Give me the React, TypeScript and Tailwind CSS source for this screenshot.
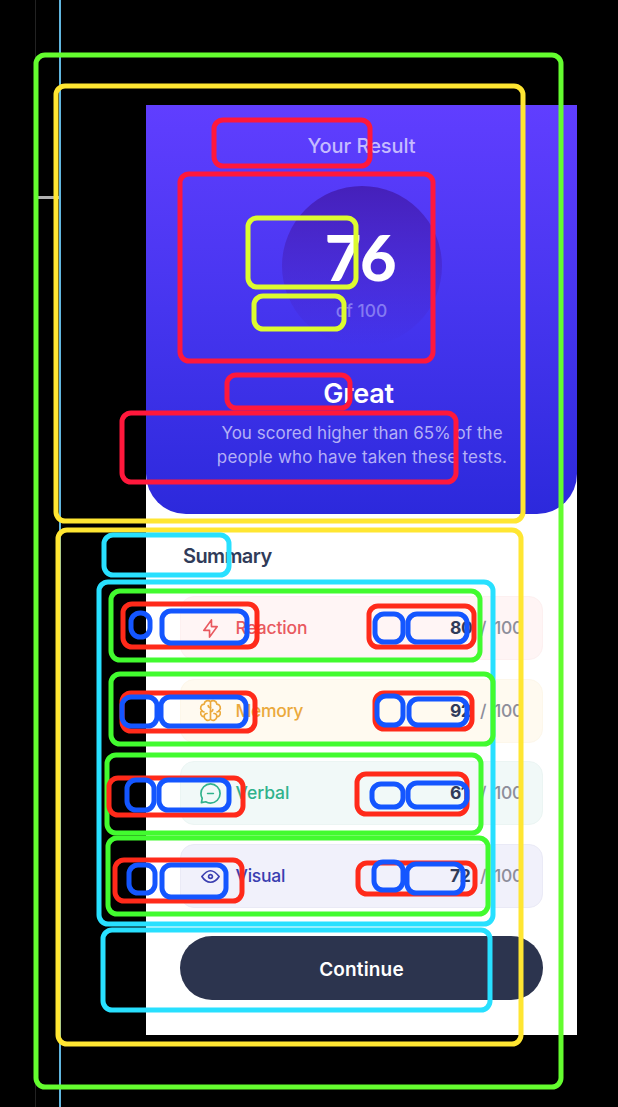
import type { ReactNode } from 'react';

const boxes: [string, number, number, number, number][] = [
  ['#64fd2f', 36, 55, 561, 1087],
  ['#ffe632', 56, 86, 523, 521],
  ['#ffe632', 58, 530, 521, 1044],
  ['#ff183c', 214, 120, 370, 166],
  ['#ff183c', 180, 174, 433, 361],
  ['#ddfb2f', 248, 218, 356, 287],
  ['#ddfb2f', 254, 296, 344, 329],
  ['#ff183c', 227, 375, 350, 408],
  ['#ff183c', 122, 413, 456, 482],
  ['#28e0ff', 104, 535, 229, 575],
  ['#28e0ff', 99, 582, 493, 924],
  ['#28e0ff', 103, 930, 490, 1010],
  ['#42fb2f', 111, 591, 480, 660],
  ['#42fb2f', 111, 674, 493, 744],
  ['#42fb2f', 107, 755, 481, 833],
  ['#42fb2f', 108, 838, 488, 914],
  ['#ff2a1a', 123, 604, 257, 647],
  ['#ff2a1a', 369, 606, 474, 647],
  ['#ff2a1a', 122, 693, 255, 731],
  ['#ff2a1a', 375, 693, 472, 729],
  ['#ff2a1a', 109, 778, 243, 815],
  ['#ff2a1a', 357, 774, 467, 814],
  ['#ff2a1a', 115, 860, 242, 901],
  ['#ff2a1a', 358, 863, 475, 894],
  ['#1456ff', 131, 613, 150, 637],
  ['#1456ff', 162, 611, 247, 643],
  ['#1456ff', 375, 614, 403, 642],
  ['#1456ff', 408, 614, 467, 642],
  ['#1456ff', 122, 697, 157, 726],
  ['#1456ff', 161, 697, 246, 726],
  ['#1456ff', 377, 696, 403, 725],
  ['#1456ff', 409, 699, 467, 725],
  ['#1456ff', 127, 780, 154, 810],
  ['#1456ff', 159, 780, 229, 810],
  ['#1456ff', 372, 784, 403, 807],
  ['#1456ff', 408, 783, 467, 807],
  ['#1456ff', 129, 865, 155, 893],
  ['#1456ff', 162, 865, 226, 897],
  ['#1456ff', 374, 862, 403, 890],
  ['#1456ff', 407, 864, 463, 893],
];

function Annotations() {
  return (
    <svg className="pointer-events-none absolute inset-0" width="618" height="1107" fill="none">
      <path d="M35.5 0V1107" stroke="#222222" />
      <path d="M38 197.5H59" stroke="#b0b0b0" strokeWidth="3" />
      <path d="M60 0V1107" stroke="#61b5de" strokeWidth="2" />
      {boxes.map(([color, x1, y1, x2, y2], i) => (
        <rect key={i} x={x1} y={y1} width={x2 - x1} height={y2 - y1} rx="9" stroke={color} strokeWidth="5" />
      ))}
    </svg>
  );
}

function Icon({ children }: { children: ReactNode }) {
  return (
    <svg
      className="size-[23px] shrink-0"
      viewBox="0 0 20 20"
      fill="none"
      stroke="currentColor"
      strokeWidth="1.45"
      strokeLinecap="round"
      strokeLinejoin="round"
    >
      {children}
    </svg>
  );
}

const rows = [
  {
    label: 'Reaction',
    score: 80,
    row: 'bg-[#fff5f5] border-[#fdf0f0]',
    text: 'text-[#e9595f] tracking-[-0.15px]',
    icon: <path d="M10.833 8.333V2.5l-6.666 9.167h5V17.5l6.666-9.167h-5Z" />,
  },
  {
    label: 'Memory',
    score: 92,
    row: 'bg-[#fffaf0] border-[#fdf7ea]',
    text: 'text-[#eba93c] tracking-[-0.35px]',
    icon: (
      <>
        <path d="M10 2.4A3.2 3.2 0 0 1 15.5 4.5A3.2 3.2 0 0 1 17.6 10A3.2 3.2 0 0 1 15.5 15.5A3.2 3.2 0 0 1 10 17.6A3.2 3.2 0 0 1 4.5 15.5A3.2 3.2 0 0 1 2.4 10A3.2 3.2 0 0 1 4.5 4.5A3.2 3.2 0 0 1 10 2.4V17.6" />
        <path d="M10 7.5a2 2 0 0 1-2-1.7M10 11a2 2 0 0 0 2-1.7M2.4 10q.6 1.1 2 1.3M17.6 10q-.6 1.1-2 1.3M7 12.6a2.2 2.2 0 0 0-2.4 2.8M13 12.6a2.2 2.2 0 0 1 2.4 2.8" />
      </>
    ),
  },
  {
    label: 'Verbal',
    score: 61,
    row: 'bg-[#f1f9f8] border-[#ebf5f3]',
    text: 'text-[#30b28c] tracking-[-0.05px]',
    icon: (
      <path d="M7.5 10h5M10 18.333A8.333 8.333 0 1 0 1.667 10c0 1.518.406 2.942 1.115 4.167l-.699 3.75 3.75-.699A8.295 8.295 0 0 0 10 18.333Z" />
    ),
  },
  {
    label: 'Visual',
    score: 72,
    row: 'bg-[#f1f1fb] border-[#eaeaf6]',
    text: 'text-[#3a3eb0] tracking-[-0.25px]',
    icon: (
      <>
        <path d="M10 11.667a1.667 1.667 0 1 0 0-3.334 1.667 1.667 0 0 0 0 3.334Z" />
        <path d="M17.5 10c-1.574 2.492-4.402 5-7.5 5s-5.926-2.508-7.5-5C4.416 7.632 6.66 5 10 5s5.584 2.632 7.5 5Z" />
      </>
    ),
  },
];

export default function App() {
  return (
    <div className="relative h-[1107px] w-[618px] overflow-hidden bg-black pt-[105px] pl-[146px] font-['Inter',sans-serif]">
      <main className="h-[930px] w-[431px] bg-white">
        <section className="flex h-[409px] flex-col items-center rounded-b-[40px] bg-linear-to-b from-[#603eff] via-[#4635ef] to-[#2c29dc] text-center">
          <h1 className="mt-[27px] text-[20px] leading-7 font-medium tracking-[-0.05px] text-[#c5baff]">Your Result</h1>
          <div className="mt-[26px] flex size-[160px] flex-col items-center rounded-full bg-linear-to-b from-[#4520ba] to-[#4030e800]">
            <div className="mt-[40px] mr-[3px] font-['Lato',sans-serif] text-[63px] leading-[62px] font-black tracking-[-1.4px] text-white">
              76
            </div>
            <div className="mt-[11px] text-[17.5px] leading-6 font-medium text-[#857af2]">of 100</div>
          </div>
          <h2 className="mt-[30px] mr-[6px] text-[27px] leading-9 font-semibold tracking-[-0.2px] text-white">Great</h2>
          <p className="mt-[9px] ml-px text-[17px] leading-6 whitespace-nowrap text-[#b4b0f6]">
            <span className="tracking-[0.03px]">You scored higher than 65% of the</span>
            <br />
            <span className="tracking-[0.2px]">people who have taken these tests.</span>
          </p>
        </section>
        <section className="pr-[34px] pl-[34px]">
          <h2 className="mt-[28px] pl-[3px] text-[20px] leading-7 font-semibold tracking-[-0.6px] text-[#303b59]">
            Summary
          </h2>
          <ul className="mt-[26px] flex flex-col gap-[18.7px]">
            {rows.map((r) => (
              <li
                key={r.label}
                className={`flex h-16 items-center rounded-[14px] border pr-[19px] pl-[18px] text-[17.5px] leading-6 ${r.row}`}
              >
                <span className={`flex items-center gap-[13.5px] font-medium ${r.text}`}>
                  <Icon>{r.icon}</Icon>
                  {r.label}
                </span>
                <span className="ml-auto flex w-[73px] justify-between tracking-[-0.5px]">
                  <b className="font-bold text-[#303b59]">{r.score}</b>
                  <span className="flex w-[43px] justify-between font-medium text-[#8d8e9b]">
                    <span>/</span>
                    <span className="tracking-[-0.3px]">100</span>
                  </span>
                </span>
              </li>
            ))}
          </ul>
          <button className="mt-[28px] flex h-16 w-full items-center justify-center rounded-full bg-[#2c344e] pt-[4px] text-[19px] font-semibold tracking-[0.15px] text-white">
            Continue
          </button>
        </section>
      </main>
      <Annotations />
    </div>
  );
}
